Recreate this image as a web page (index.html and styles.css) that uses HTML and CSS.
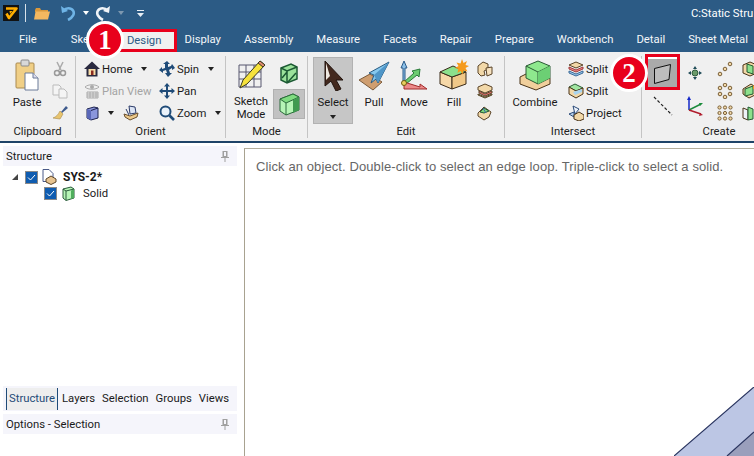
FILE: index.html
```html
<!DOCTYPE html>
<html lang="en">

<head>
  <meta charset="UTF-8">
  <meta name="viewport" content="width=device-width, initial-scale=1.0">
  <title>C:Static Structural</title>
  <link rel="stylesheet" href="styles.css">
</head>

<body>
  <div class="titlebar">
    <svg class="app-logo" width="16" height="16" viewBox="0 0 16 16"><rect width="16" height="16" fill="#111"/><path d="M3 3.500h10.500L6 13 3.500 8.500" fill="none" stroke="#ffae00" stroke-width="2.600" stroke-linejoin="round"/><path d="M6.500 6h3L7 9z" fill="#ffae00"/></svg>
    <span class="qat-sep"></span>
    <svg class="qat-folder" width="16" height="13" viewBox="0 0 16 13"><path d="M1 3l1-2h4l1 2h7v2H1z" fill="#d9983c"/><path d="M0 12.500l1.500-8H16l-2 8z" fill="#f4b860"/></svg>
    <svg class="qat-undo" width="16" height="16" viewBox="0 0 16 16"><path d="M1 1l1 7 6-2z" fill="#6fb4e6"/><path d="M3.500 5.500C6 2.500 11 2.500 13 5.500c2 3 0 7-5 9.500" fill="none" stroke="#6fb4e6" stroke-width="2.600"/></svg>
    <span class="caret caret-white qat-caret"></span>
    <svg class="qat-redo" width="16" height="16" viewBox="0 0 16 16"><path d="M15 1l-1 7-6-2z" fill="#f0f4f8"/><path d="M12.500 5.500C10 2.500 5 2.500 3 5.500c-2 3 0 7 5 9.500" fill="none" stroke="#f0f4f8" stroke-width="2.600"/></svg>
    <span class="caret caret-dim qat-caret2"></span>
    <svg class="qat-more" width="7" height="7" viewBox="0 0 7 7"><path d="M0 0h7v1H0zM0 3h7L3.500 7z" fill="#e8eef4"/></svg>
    <span class="doc-title">C:Static Stru</span>
  </div>

  <div class="tabs">
    <span class="tab tab-file">File</span>
    <span class="tab tab-sketch">Sketch</span>
    <span class="tab tab-active">Design</span>
    <span class="tab">Display</span>
    <span class="tab">Assembly</span>
    <span class="tab">Measure</span>
    <span class="tab">Facets</span>
    <span class="tab">Repair</span>
    <span class="tab">Prepare</span>
    <span class="tab">Workbench</span>
    <span class="tab">Detail</span>
    <span class="tab">Sheet Metal</span>
  </div>

  <div class="ribbon">
    <div class="group group-clipboard">
      <div class="group-body">
        <div class="big big-paste">
          <svg width="24" height="32" viewBox="0 0 24 32"><rect x="1" y="4" width="18" height="25" rx="1" fill="#f0cf86" stroke="#a98a50"/><rect x="6" y="1" width="8" height="6" rx="1" fill="#d8d8d8" stroke="#8a8a8a"/><path d="M10 14h8l5 5v12H10z" fill="#fff" stroke="#6a7a98"/><path d="M18 14v5h5" fill="#dde" stroke="#6a7a98"/></svg>
          <span>Paste</span>
        </div>
        <div class="small-col clip-col">
          <div class="row"><svg width="16" height="16" viewBox="0 0 16 16"><path d="M5 1l4 8M11 1L7 9" stroke="#aaa" stroke-width="1.500"/><circle cx="5" cy="12" r="2.500" fill="none" stroke="#999" stroke-width="1.500"/><circle cx="11" cy="12" r="2.500" fill="none" stroke="#999" stroke-width="1.500"/></svg></div>
          <div class="row"><svg width="16" height="16" viewBox="0 0 16 16"><path d="M1 2h6l2 2v8H1z" fill="#f4f4f4" stroke="#bbb"/><path d="M7 6h5l3 3v6H7z" fill="#f4f4f4" stroke="#bbb"/></svg></div>
          <div class="row"><svg width="16" height="16" viewBox="0 0 16 16"><path d="M9 7l5-6 2 2-6 5z" fill="#3e5a8c"/><path d="M8 6l3 3-3 5-7-1c3-1 5-3 7-7z" fill="#e8c46e" stroke="#a88a48" stroke-width=".6"/></svg></div>
        </div>
      </div>
      <div class="group-label">Clipboard</div>
    </div>

    <div class="group group-orient">
      <div class="group-body">
        <div class="small-col orient-col">
          <div class="row"><svg width="16" height="16" viewBox="0 0 16 16"><path d="M8 .500L0 8h2.500v7.500h11V8H16z" fill="#2a2a40"/><path d="M4.500 8h7v6h-7z" fill="#f6dca8"/><path d="M7 9.500h2.500V14H7z" fill="#8a2a20"/></svg><span>Home</span><span class="caret"></span></div>
          <div class="row row-off"><svg width="16" height="16" viewBox="0 0 16 16"><path d="M1 4c3-3 11-3 14 0-3 3-11 3-14 0z" fill="none" stroke="#aaa"/><circle cx="8" cy="4" r="2" fill="#aaa"/><path d="M3 9h11v6H3zM3 11h11M3 13h11M6 9v6M9 9v6M12 9v6" fill="none" stroke="#aaa"/></svg><span>Plan View</span></div>
          <div class="row row-3"><svg class="view-cube" width="13" height="15" viewBox="0 0 13 15"><path d="M1 3l7-2 4 1v10l-7 2-4-2z" fill="#8a96dc" stroke="#1e2450"/><path d="M1 3l4 1.500V14l-4-2z" fill="#5a68b8"/><path d="M5 4.500l7-2.500" stroke="#1e2450" fill="none"/></svg><span class="caret"></span><svg class="view-ico" width="17" height="16" viewBox="0 0 17 16"><path d="M6 1l6 1 1 6-6 1z" fill="#dbe4f4" stroke="#2a3a68"/><path d="M1 9l6 2 8-3-1 4-7 3-5-3z" fill="#ecc98a" stroke="#6a5030"/><path d="M3 4l3 6" stroke="#2a3a68"/></svg></div>
        </div>
        <div class="small-col">
          <div class="row"><svg width="16" height="16" viewBox="0 0 16 16"><path d="M8 0l3 3H9v3l3-1 1-2 3 4-3 2V7l-3 2 1 3h2l-4 4-3-4h2l-1-3-3 1v2L0 9l3-3v2l3-1V3H4z" fill="#1f4b78"/></svg><span>Spin</span><span class="caret"></span></div>
          <div class="row"><svg width="16" height="16" viewBox="0 0 16 16"><path d="M8 0l3 3.500H9V7h3.500V5L16 8l-3.500 3V9H9v3.500h2L8 16l-3-3.500h2V9H3.500v2L0 8l3.500-3v2H7V3.500H5z" fill="#1f4b78"/></svg><span>Pan</span></div>
          <div class="row"><svg width="16" height="16" viewBox="0 0 16 16"><circle cx="6.500" cy="6.500" r="5" fill="#eaf2fa" stroke="#1f4b78" stroke-width="2"/><path d="M10.500 10.500l4.500 4.500" stroke="#1f4b78" stroke-width="2.600"/></svg><span>Zoom</span><span class="caret"></span></div>
        </div>
      </div>
      <div class="group-label">Orient</div>
    </div>

    <div class="group group-mode">
      <div class="group-body">
        <div class="big big-sketch">
          <svg width="29" height="32" viewBox="0 0 29 32"><path d="M2 6h22v22H2zM2 13h22M2 20h22M9 6v22M17 6v22" fill="none" stroke="#56566e"/><path d="M23 2l5 4-18 19-7 4 3-8z" fill="#f6e23c" stroke="#3a3a20"/><path d="M23 2l5 4-2 2-5-4z" fill="#e08a70" stroke="#3a3a20"/></svg>
          <span>Sketch<br>Mode</span>
        </div>
        <div class="mode-col">
          <svg class="mode-top" width="18" height="21" viewBox="0 0 18 21"><path d="M1 5l10-4 6 3v12L7 20l-6-3z" fill="#9be29b" stroke="#1c5a34" stroke-width="1.500"/><path d="M7 8v12M1 5l6 3 10-4M2 15l5-6M8 19l8-9" stroke="#1c5a34" stroke-width="1.500" fill="none"/></svg>
          <div class="mode-on">
            <svg width="21" height="24" viewBox="0 0 21 24"><path d="M1 7l13-5 6 3v13L7 23l-6-4z" fill="#b6f5b6" stroke="#2a6a3a"/><path d="M1 7l6 4 13-6-6-3z" fill="#7fdc80" stroke="#2a6a3a"/><path d="M14 8l6-3v13l-6 3z" fill="#3f9a50"/><path d="M7 11v12" stroke="#2a6a3a"/></svg>
          </div>
        </div>
      </div>
      <div class="group-label">Mode</div>
    </div>

    <div class="group group-edit">
      <div class="group-body">
        <div class="big big-select">
          <svg width="24" height="30" viewBox="0 0 24 30"><path d="M4 0l18 19-7 0 5 9-5 2-5-10-6 5z" fill="#43291e" stroke="#23140e"/><path d="M5 2v17l4-4z" fill="#efe8e0"/></svg>
          <span>Select</span>
          <span class="caret caret-select"></span>
        </div>
        <div class="big">
          <svg width="32" height="32" viewBox="0 0 32 32"><path d="M1 21l11-6 12 8-9 8z" fill="#cf9e70" stroke="#7a5a3a"/><path d="M31 3L11 14l5 2-3 8 5-4 2 4z" fill="#86c8ee" stroke="#2a5a80"/><path d="M31 3L16 16l4 8z" fill="#4f96c8"/></svg>
          <span>Pull</span>
        </div>
        <div class="big">
          <svg width="28" height="32" viewBox="0 0 28 32"><path d="M4 2l3 7H5v14H3V9H1z" fill="#8cc0e8" stroke="#2a5a88"/><path d="M4 23l10-9-2-2 8-2-1 8-2-2-11 9z" fill="#6ccc70" stroke="#2a7a3a"/><path d="M4 23l16 5v-3l7 5H4z" fill="#ec8a8a" stroke="#a02a2a"/><circle cx="4" cy="24" r="2.500" fill="#e8d060" stroke="#705a10"/></svg>
          <span>Move</span>
        </div>
        <div class="big">
          <svg width="30" height="32" viewBox="0 0 30 32"><path d="M1 13l12 5v12L1 25z" fill="#f6d8a8" stroke="#3a2a18"/><path d="M13 18l14-5v12l-14 5z" fill="#f0c888" stroke="#3a2a18"/><path d="M1 13l13-6 13 6-14 5z" fill="#8ce08c" stroke="#3a2a18"/><path d="M23 0l1.500 4 3.500-2-1.500 4 3.500 1-3.500 2 2 3.500-4-1-1 4-2-3.500-3 2 .8-4-3.300-1 3.500-2-2-3.500 4 1z" fill="#f59a1c"/></svg>
          <span>Fill</span>
        </div>
        <div class="small-col edit-col">
          <div class="row"><svg width="16" height="16" viewBox="0 0 16 16"><path d="M1 5l5-4 5 2v5l-4 2 1 4-4 1-3-3z" fill="#f2d8a8" stroke="#5a4428"/><path d="M9 7l6-1v7l-5 2z" fill="#f6e2c0" stroke="#5a4428"/></svg></div>
          <div class="row"><svg width="16" height="16" viewBox="0 0 16 16"><path d="M1 4l7-3 7 3v3l-7 3-7-3z" fill="#f2d8a8" stroke="#5a4428"/><path d="M2 8l6 3 7-3v2l-7 3-6-3z" fill="#e87070" stroke="#5a4428"/><path d="M1 11l7 3 7-3v1l-7 3-7-3z" fill="#8cd68c" stroke="#5a4428"/></svg></div>
          <div class="row"><svg width="16" height="16" viewBox="0 0 16 16"><path d="M1 8l6-6 7 5-2 5-5 3-6-4z" fill="#f2d8a8" stroke="#5a4428"/><path d="M3 7l4-4 5 3-5 2z" fill="#7cd27c" stroke="#245a34"/><path d="M6 3l3 5" stroke="#3a6aa8"/></svg></div>
        </div>
      </div>
      <div class="group-label">Edit</div>
    </div>

    <div class="group group-intersect">
      <div class="group-body">
        <div class="big big-combine">
          <svg width="32" height="32" viewBox="0 0 32 32"><path d="M1 18l8-4 22 5v6l-14 6-16-6z" fill="#f0cf9c" stroke="#4a3418"/><path d="M7 7l12-5 12 5v12l-12 6-12-6z" fill="#8ee88e" stroke="#2a5a34"/><path d="M7 7l12 6 12-6M19 13v12" stroke="#2a5a34" fill="none"/><path d="M19 13l12-6v12l-12 6z" fill="#6ccf74"/></svg>
          <span>Combine</span>
        </div>
        <div class="small-col intersect-col">
          <div class="row"><svg width="16" height="16" viewBox="0 0 16 16"><path d="M1 4l7-3 7 3-7 3z" fill="#f2d8a8" stroke="#5a4428"/><path d="M1 6l7 3 7-3v2l-7 3-7-3z" fill="#f08a8a" stroke="#a03a3a"/><path d="M1 10l7 3 7-3v2l-7 3-7-3z" fill="#9cc8ec" stroke="#3a6a98"/></svg><span>Split</span></div>
          <div class="row"><svg width="16" height="16" viewBox="0 0 16 16"><path d="M1 4l6-3 8 4-7 3z" fill="#a0e4a0" stroke="#2a5a34"/><path d="M1 4v7l7 4 7-4V5l-7 3z" fill="#f2d8a8" stroke="#4a3418"/><path d="M5 9l9-3v3l-7 3z" fill="#a8d4f0"/></svg><span>Split</span></div>
          <div class="row"><svg width="16" height="16" viewBox="0 0 16 16"><path d="M5 1l6 3-4 5z" fill="#eef4fc" stroke="#2a4a78"/><path d="M1 9l5-2v5z" fill="#bcd4ec" stroke="#2a4a78"/><path d="M6 10l5-3 5 3v4l-5 2-5-2z" fill="#f2d8a8" stroke="#4a3418"/></svg><span>Project</span></div>
        </div>
      </div>
      <div class="group-label">Intersect</div>
    </div>

    <div class="group group-create">
      <div class="group-body">
        <div class="create-col">
          <div class="plane-btn">
            <svg width="17" height="20" viewBox="0 0 17 20"><path d="M.5 4.500L16.500.5 15 15.500.5 19.500z" fill="#bdbdbd" stroke="#111"/></svg>
          </div>
          <svg class="line-ico" width="20" height="20" viewBox="0 0 20 20"><path d="M1 1l18 18" stroke="#222" stroke-width="1.200" stroke-dasharray="3 2"/></svg>
        </div>
        <div class="create-col create-mid">
          <svg class="point-ico" width="16" height="16" viewBox="0 0 16 16"><circle cx="8" cy="8" r="3" fill="#6a9a6a" stroke="#2e5a3c"/><path d="M8 1l2 3H6zM8 15l-2-3h4zM1 8l3-2v4zM15 8l-3 2V6z" fill="#1f4b58"/></svg>
          <svg class="axes-ico" width="18" height="20" viewBox="0 0 18 20"><path d="M3 14V2" stroke="#1428c8" stroke-width="1.500"/><path d="M3 0l2 4H1z" fill="#1428c8"/><path d="M3 14l12-6" stroke="#1c8c3c" stroke-width="1.500"/><path d="M17 7l-4 0 1 3z" fill="#1c8c3c"/><path d="M3 14l12 4" stroke="#b01c2c" stroke-width="1.500"/><path d="M17 19l-4 1 1-3z" fill="#b01c2c"/></svg>
        </div>
        <div class="small-col create-pattern">
          <div class="row"><svg width="16" height="16" viewBox="0 0 16 16"><g fill="#f2d8a8" stroke="#7a6038"><circle cx="3" cy="13" r="1.800"/><circle cx="8" cy="8" r="1.800"/><circle cx="13" cy="3" r="1.800"/></g></svg></div>
          <div class="row"><svg width="16" height="16" viewBox="0 0 16 16"><g fill="#f2d8a8" stroke="#7a6038"><circle cx="8" cy="2" r="1.800"/><circle cx="13" cy="5" r="1.800"/><circle cx="13" cy="11" r="1.800"/><circle cx="8" cy="14" r="1.800"/><circle cx="3" cy="11" r="1.800"/><circle cx="3" cy="5" r="1.800"/></g></svg></div>
          <div class="row"><svg width="16" height="16" viewBox="0 0 16 16"><g fill="#f2d8a8" stroke="#7a6038"><circle cx="2.500" cy="2.500" r="1.600"/><circle cx="8" cy="2.500" r="1.600"/><circle cx="13.500" cy="2.500" r="1.600"/><circle cx="2.500" cy="8" r="1.600"/><circle cx="8" cy="8" r="1.600"/><circle cx="13.500" cy="8" r="1.600"/><circle cx="2.500" cy="13.500" r="1.600"/><circle cx="8" cy="13.500" r="1.600"/><circle cx="13.500" cy="13.500" r="1.600"/></g></svg></div>
        </div>
        <div class="small-col create-far">
          <div class="row"><svg width="16" height="16" viewBox="0 0 16 16"><path d="M1 4l7-3 7 3v8l-7 3-7-3z" fill="#f2d8a8" stroke="#4a3418"/><path d="M5 3l6 2v8l-6-2z" fill="#8ce08c" stroke="#245a34"/></svg></div>
          <div class="row"><svg width="16" height="16" viewBox="0 0 16 16"><path d="M1 6l8-5 6 4v6l-8 4-6-4z" fill="#f2d8a8" stroke="#4a3418"/><path d="M3 6l8-3v8l-8 2z" fill="#8ce08c" stroke="#245a34"/><path d="M11 2l3 3-3 1z" fill="#f59a1c"/></svg></div>
          <div class="row"><svg width="16" height="16" viewBox="0 0 16 16"><path d="M1 3l5 2v10l-5-2z" fill="#eef2f8" stroke="#4a3418"/><path d="M6 2l5 2v10l-5 1z" fill="#8ce08c" stroke="#245a34"/><path d="M12 2l4 4-4 2z" fill="#f5b81c"/></svg></div>
        </div>
      </div>
      <div class="group-label">Create</div>
    </div>
  </div>

  <div class="workspace">
    <div class="side">
      <div class="pane-head">
        <span>Structure</span>
        <svg width="8" height="11" viewBox="0 0 8 11"><path d="M1.500 0h5v6h-5zM0 6h8v1H0zM3.500 7h1v4h-1z" fill="#a0a0a0"/><path d="M3 1h2v4H3z" fill="#f5f5fb"/></svg>
      </div>
      <div class="tree">
        <div class="tree-row">
          <span class="tree-arrow"></span>
          <span class="check"><svg width="9" height="7" viewBox="0 0 9 7"><path d="M1 3.500l2.500 2.500L8 1" fill="none" stroke="#fff"/></svg></span>
          <svg class="doc-ico" width="15" height="16" viewBox="0 0 15 16"><path d="M1 .5h6l4 4v8H1z" fill="#fff" stroke="#4a5a88"/><path d="M4 10l5-3 5 3v3l-5 2.500L4 13z" fill="#e8c490" stroke="#5a4428"/></svg>
          <span class="tree-root">SYS-2*</span>
        </div>
        <div class="tree-row tree-child">
          <span class="check"><svg width="9" height="7" viewBox="0 0 9 7"><path d="M1 3.500l2.500 2.500L8 1" fill="none" stroke="#fff"/></svg></span>
          <svg class="solid-ico" width="13" height="15" viewBox="0 0 13 15"><path d="M1 3l8-2 3 2v9l-8 2.500L1 12z" fill="#b6f5b6" stroke="#2a5a3a"/><path d="M1 3l3 2 8-2" fill="none" stroke="#2a5a3a"/><path d="M4 5v9" stroke="#2a5a3a"/><path d="M9 4.500l3-1V12l-3 1z" fill="#4fae5c"/></svg>
          <span>Solid</span>
        </div>
      </div>
      <div class="pane-tabs">
        <span class="pane-tab pane-tab-on">Structure</span>
        <span class="pane-tab">Layers</span>
        <span class="pane-tab">Selection</span>
        <span class="pane-tab">Groups</span>
        <span class="pane-tab">Views</span>
      </div>
      <div class="pane-head pane-options">
        <span>Options - Selection</span>
        <svg width="8" height="11" viewBox="0 0 8 11"><path d="M1.500 0h5v6h-5zM0 6h8v1H0zM3.500 7h1v4h-1z" fill="#a0a0a0"/><path d="M3 1h2v4H3z" fill="#f5f5fb"/></svg>
      </div>
      <div class="pane-rest"></div>
    </div>
    <div class="viewport">
      <div class="hint">Click an object. Double-click to select an edge loop. Triple-click to select a solid.</div>
      <svg class="model" width="80" height="69" viewBox="0 0 80 69"><path d="M0 69L80 0v45L53 69z" fill="#bcc6e4"/><path d="M53 69l27-24v24z" fill="#9a9fbc"/><path d="M0 69L80 0M53 69l27-24" fill="none" stroke="#2a3560" stroke-width="1.200"/></svg>
    </div>
  </div>

  <!-- callouts over the screenshot -->
  <div class="mark-box mark-plane"></div>
  <div class="badge badge-one">1</div>
  <div class="badge badge-two">2</div>
</body>

</html>
```

FILE: styles.css
```css
body,
html {
  width: 100%;
  height: 100%;
  padding: 0;
  margin: 0;
  overflow: hidden;
}

body {
  position: relative;
  display: flex;
  flex-direction: column;
  background: #fff;
  color: #1a1a1a;
  font-family: Roboto, "Liberation Sans", sans-serif;
  font-size: 11.3px;
}

svg {
  display: block;
  flex: none;
}

/* title bar */
.titlebar {
  display: flex;
  align-items: center;
  flex: none;
  height: 26px;
  padding-left: 3px;
  background: #2c5b85;
}

.qat-sep {
  width: 1px;
  height: 18px;
  margin-left: 6px;
  background: #d8e2ea;
}

.qat-folder {
  margin-left: 8px;
}

.qat-undo {
  margin-left: 10px;
}

.qat-caret {
  margin-left: 6px;
}

.qat-redo {
  margin-left: 6px;
}

.qat-caret2 {
  margin-left: 5px;
}

.qat-more {
  margin-left: 13px;
}

.doc-title {
  margin-left: 547px;
  color: #fff;
  white-space: nowrap;
}

/* tabs */
.tabs {
  display: flex;
  align-items: center;
  flex: none;
  box-sizing: border-box;
  height: 26px;
  padding: 1px 0 0 19px;
  gap: 23px;
  background: #2c5b85;
}

.tab {
  color: #f4f7fa;
  white-space: nowrap;
}

.tab-file {
  margin-right: 11px;
}

.tab-active {
  box-sizing: border-box;
  height: 23px;
  line-height: 17px;
  margin: 2px -16px 0 -11px;
  padding: 0 13px 0 7px;
  color: #2c5b85;
  background: #f0f0f0;
  border: 3px solid #e8001c;
}

/* ribbon */
.ribbon {
  display: flex;
  flex: none;
  height: 82px;
  padding: 4px 0 3px;
  background: #f0f0f0;
  border-bottom: 2px solid #1f4468;
  overflow: hidden;
}

.group {
  display: flex;
  flex-direction: column;
  flex: none;
  box-sizing: border-box;
  height: 82px;
  border-right: 1px solid #c4c4c4;
}

.group-clipboard { width: 76px; }
.group-orient { width: 150px; }
.group-mode { width: 82px; }
.group-edit { width: 197px; }
.group-intersect { width: 137px; }
.group-create { width: 154px; border-right: 0; }

.group-body {
  display: flex;
  flex: 1;
}

.group-label {
  height: 14px;
  line-height: 16px;
  text-align: center;
  color: #222;
}

.big {
  display: flex;
  flex-direction: column;
  align-items: center;
  flex: none;
  width: 40px;
  padding-top: 3px;
  line-height: 13px;
  text-align: center;
}

.big svg {
  margin-bottom: 5px;
}

.big-paste {
  width: 28px;
  margin-left: 13px;
}

.big-sketch {
  width: 30px;
  margin-left: 10px;
}

.big-sketch svg {
  margin-bottom: 4px;
}

.big-select {
  box-sizing: border-box;
  height: 67px;
  margin: 1px 1px 0 5px;
  padding-top: 3px;
  background: #c6c6c6;
  border: 1px solid #b2b2b2;
}

.big-select svg {
  margin-bottom: 5px;
}

.big-combine {
  width: 44px;
  margin-left: 8px;
}

.caret {
  display: inline-block;
  flex: none;
  width: 0;
  height: 0;
  margin-left: 7px;
  border-top: 4px solid #222;
  border-left: 3.5px solid transparent;
  border-right: 3.5px solid transparent;
}

.caret-white {
  border-top-color: #fff;
}

.caret-dim {
  border-top-color: #7d98b0;
}

.caret-select {
  margin: 6px 0 0;
}

.small-col {
  display: grid;
  grid-auto-rows: 22px;
  margin-top: 2px;
}

.row {
  display: flex;
  align-items: center;
  gap: 2px;
  white-space: nowrap;
}

.row-off {
  color: #a4a4a4;
}

.row-3 .view-cube {
  margin-left: 2px;
}

.row-3 .caret {
  margin-left: 7px;
}

.row-3 .view-ico {
  margin-left: 7px;
}

.clip-col {
  margin-left: 11px;
}

.orient-col {
  width: 75px;
  margin-left: 8px;
}

.mode-col {
  width: 32px;
  margin-left: 7px;
}

.mode-top {
  margin: 7px 0 5px 7px;
}

.mode-on {
  display: flex;
  align-items: center;
  justify-content: center;
  box-sizing: border-box;
  height: 30px;
  background: #c2c2c2;
  border: 1px solid #b0b0b0;
}

.edit-col {
  margin-left: 3px;
}

.intersect-col {
  margin-left: 11px;
}

/* create group */
.create-col {
  width: 29px;
  margin-left: 6px;
}

.plane-btn {
  display: flex;
  align-items: center;
  justify-content: center;
  box-sizing: border-box;
  height: 31px;
  margin-top: 1px;
  background: #aaa;
  border-top: 2px solid #fff;
}

.line-ico {
  margin: 8px 0 0 5px;
}

.create-mid {
  width: 18px;
  margin-left: 9px;
}

.point-ico {
  margin: 9px 0 0 1px;
}

.axes-ico {
  margin-top: 15px;
}

.create-pattern {
  margin-left: 13px;
}

.create-far {
  margin-left: 9px;
}

/* lower part */
.workspace {
  display: flex;
  flex: 1;
  min-height: 0;
}

.side {
  display: flex;
  flex-direction: column;
  flex: none;
  box-sizing: border-box;
  width: 244px;
  padding: 3px 7px 0 3px;
}

.pane-head {
  display: flex;
  align-items: center;
  justify-content: space-between;
  flex: none;
  height: 20px;
  padding: 0 8px 0 3px;
  background: #f5f5fb;
}

.tree {
  flex: 1;
  padding-top: 3px;
}

.tree-row {
  display: flex;
  align-items: center;
  height: 16px;
  padding-left: 9px;
}

.tree-child {
  padding-left: 41px;
}

.tree-arrow {
  width: 0;
  height: 0;
  margin-right: 7px;
  border-bottom: 6px solid #444;
  border-left: 6px solid transparent;
}

.check {
  display: flex;
  align-items: center;
  justify-content: center;
  box-sizing: border-box;
  width: 13px;
  height: 13px;
  background: #0f5cb0;
  border: 1px solid #8a8a8a;
}

.doc-ico {
  margin: 0 6px 0 4px;
}

.solid-ico {
  margin: 0 8px 0 5px;
}

.tree-root {
  font-size: 12px;
  font-weight: bold;
}

.pane-tabs {
  display: flex;
  align-items: center;
  flex: none;
  height: 25px;
  padding-left: 3px;
  gap: 7px;
  background: #f5f5fb;
}

.pane-tab-on {
  box-sizing: border-box;
  height: 22px;
  line-height: 21px;
  padding: 0 2px;
  margin-right: -3px;
  color: #1f4b78;
  background: #eee;
  border-left: 1px solid #1f4b78;
  border-right: 1px solid #1f4b78;
}

.pane-options {
  margin-top: 3px;
}

.pane-rest {
  flex: none;
  height: 22px;
}

.viewport {
  position: relative;
  flex: 1;
  margin-top: 5px;
  background: #fff;
  border-top: 1px solid #b4ae9c;
  border-left: 1px solid #a8a290;
}

.hint {
  padding: 10px 0 0 11px;
  color: #666;
  font-family: "Liberation Sans", Arial, sans-serif;
  font-size: 13px;
  letter-spacing: .1px;
}

.model {
  position: absolute;
  right: 0;
  bottom: 0;
}

/* red callouts */
.mark-box {
  position: absolute;
  box-sizing: border-box;
  border: 3px solid #e8001c;
}

.mark-plane {
  left: 645px;
  top: 54px;
  width: 35px;
  height: 36px;
}

.badge {
  position: absolute;
  box-sizing: border-box;
  display: flex;
  align-items: center;
  justify-content: center;
  width: 38px;
  height: 38px;
  color: #fff;
  background: #e8001c;
  border: 3px solid #fff;
  border-radius: 50%;
  font-family: "Liberation Serif", "Times New Roman", serif;
  font-size: 27px;
  font-weight: bold;
  z-index: 2;
}

.badge-one {
  left: 86px;
  top: 21px;
}

.badge-two {
  left: 610px;
  top: 54px;
}
```
